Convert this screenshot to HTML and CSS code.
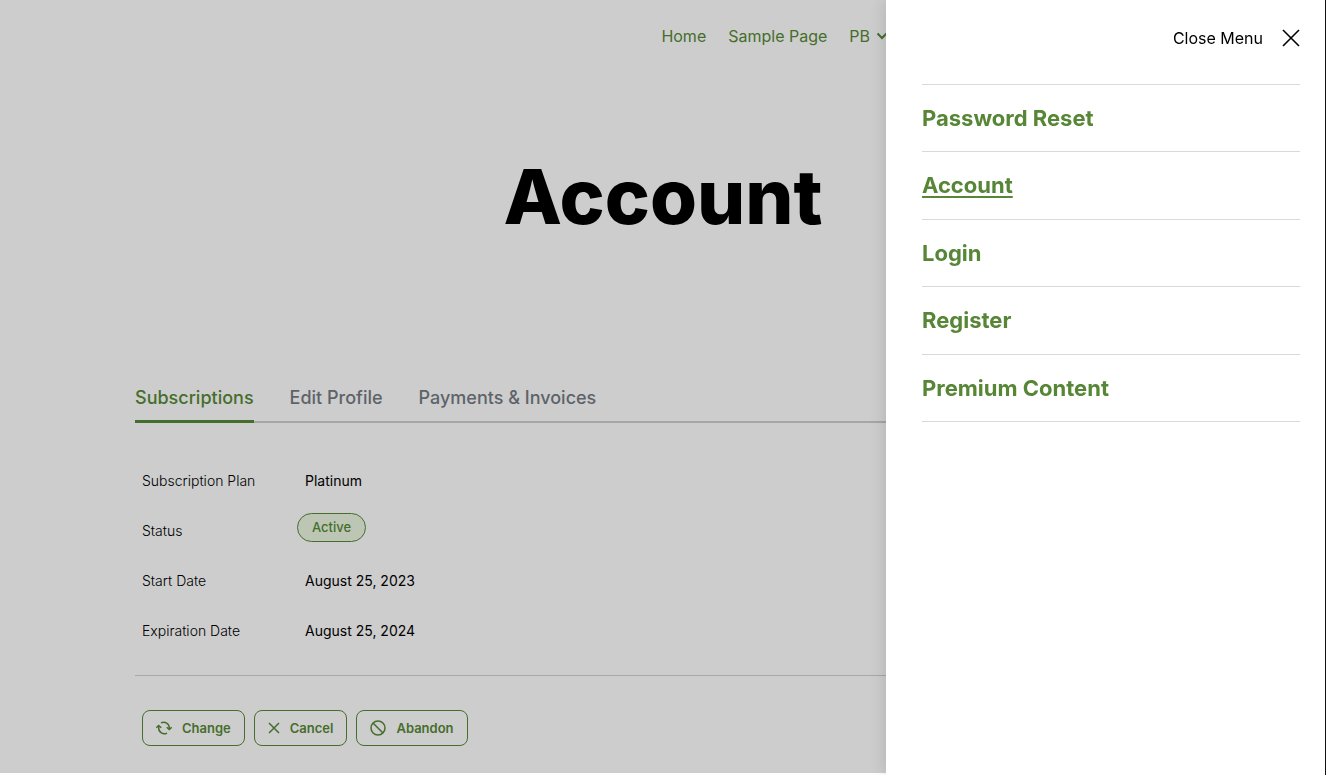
FILE: index.html
```html
<!DOCTYPE html>
<html lang="en">
<head>
<meta charset="utf-8">
<meta name="viewport" content="width=device-width, initial-scale=1">
<title>Account</title>
<link rel="stylesheet" href="styles.css">
</head>
<body>
<div class="page">
  <header class="site-header">
    <nav class="main-nav" aria-label="Main">
      <a href="#">Home</a>
      <a href="#">Sample Page</a>
      <a class="has-children" href="#">PB
        <svg class="chevron" viewBox="0 0 12 8" aria-hidden="true"><path d="M1.500 1.500 6 6l4.500-4.500"/></svg>
      </a>
    </nav>
  </header>
  <main class="content">
    <h1 class="page-title">Account</h1>
    <nav class="tabs" aria-label="Account sections">
      <a class="tab tab-active" href="#" aria-current="page">Subscriptions</a>
      <a class="tab" href="#">Edit Profile</a>
      <a class="tab" href="#">Payments &amp; Invoices</a>
    </nav>
    <table class="details">
      <tbody>
        <tr><th scope="row">Subscription Plan</th><td>Platinum</td></tr>
        <tr><th scope="row">Status</th><td class="status-cell"><span class="status">Active</span></td></tr>
        <tr><th scope="row">Start Date</th><td>August 25, 2023</td></tr>
        <tr><th scope="row">Expiration Date</th><td>August 25, 2024</td></tr>
      </tbody>
    </table>
    <div class="actions">
      <button class="action" type="button">
        <svg class="icon" viewBox="0 0 16 16" aria-hidden="true"><path d="M5 2.900A5.600 5.600 0 0 1 13.300 8v1M11 13.100A5.600 5.600 0 0 1 2.700 8V6"/><path d="M10.700 7.200 13.300 9.500l2.400-2.300M.3 7.800l2.400-2.300 2.600 2.300"/></svg>
        Change
      </button>
      <button class="action" type="button">
        <svg class="icon icon-small" viewBox="0 0 12 12" aria-hidden="true"><path d="m1 1 10 10M11 1 1 11"/></svg>
        Cancel
      </button>
      <button class="action" type="button">
        <svg class="icon" viewBox="0 0 16 16" aria-hidden="true"><circle cx="8" cy="8" r="7"/><path d="m3 3 10 10"/></svg>
        Abandon
      </button>
    </div>
  </main>
</div>
<aside class="drawer">
  <button class="close" type="button">
    Close Menu
    <svg class="close-icon" viewBox="0 0 18 18" aria-hidden="true"><path d="m1 1 16 16M17 1 1 17"/></svg>
  </button>
  <nav aria-label="Menu">
    <ul class="menu">
      <li><a href="#">Password Reset</a></li>
      <li><a class="current" href="#" aria-current="page">Account</a></li>
      <li><a href="#">Login</a></li>
      <li><a href="#">Register</a></li>
      <li><a href="#">Premium Content</a></li>
    </ul>
  </nav>
</aside>
</body>
</html>
```
FILE: styles.css
```css
* { box-sizing: border-box; }

body {
  margin: 0;
  min-height: 100vh;
  display: flex;
  background: #fff;
  color: #000;
  font-family: Inter, "Liberation Sans", sans-serif;
}

a { color: inherit; text-decoration: none; }

svg { flex: none; fill: none; stroke: currentColor; }

.page {
  flex: 1;
  margin-bottom: 2px;
  background: #cdcdcd;
}

.site-header {
  padding: 24px 438px 0 24px;
  color: #456e2c;
}

.main-nav {
  display: flex;
  justify-content: flex-end;
  gap: 22px;
  font-size: 16px;
  font-weight: 400;
  line-height: 24px;
}

.has-children { display: flex; align-items: center; gap: 6px; }

.chevron { width: 12px; height: 8px; stroke-width: 2; }

.content {
  width: calc(100% - 48px);
  max-width: 1056px;
  margin: 0 auto;
}

.page-title {
  margin: 106px 0 0;
  text-align: center;
  font-size: 76px;
  font-weight: 800;
  line-height: 84px;
}

.tabs {
  display: flex;
  gap: 36px;
  margin-top: 146px;
  border-bottom: 2px solid #a6a6a8;
  color: #5d6369;
  font-size: 18px;
  font-weight: 500;
  line-height: 28px;
}

.tab { padding-bottom: 8px; }

.tab-active {
  margin-bottom: -2px;
  border-bottom: 3px solid #456e2c;
  color: #456e2c;
}

.details {
  width: 100%;
  margin-top: 33px;
  border-collapse: collapse;
  font-size: 14px;
  line-height: 20px;
}

.details tr { height: 50px; }

.details th {
  width: 162px;
  padding: 0 7px;
  text-align: left;
  font-weight: 300;
}

.details td { padding: 0 8px; font-weight: 400; }

.details .status-cell { padding: 0 0 7px; }

.status {
  display: inline-block;
  padding: 3px 14px 4px;
  border: 1px solid #456e2c;
  border-radius: 15px;
  background: #bdc6b5;
  color: #456e2c;
  font-size: 13px;
  font-weight: 500;
}

.actions {
  display: flex;
  gap: 9px;
  margin-top: 19px;
  padding: 34px 7px 24px;
  border-top: 1px solid #a6a9a8;
}

.action {
  display: flex;
  align-items: center;
  gap: 10px;
  height: 36px;
  padding: 0 13px;
  border: 1px solid #456e2c;
  border-radius: 8px;
  background: none;
  color: #456e2c;
  font: 600 13px/20px Inter, "Liberation Sans", sans-serif;
}

.icon { width: 16px; height: 16px; stroke-width: 1.5; }

.icon-small { width: 12px; height: 12px; }

.drawer {
  position: fixed;
  inset: 0 0 0 auto;
  width: 440px;
  padding: 22px 25px 0 36px;
  border-right: 1px solid #111;
  background: #fff;
  box-shadow: 0 0 16px rgba(0, 0, 0, 0.15);
}

.close {
  display: flex;
  align-items: center;
  justify-content: flex-end;
  gap: 19px;
  width: 100%;
  height: 32px;
  padding: 0;
  border: 0;
  background: none;
  color: #000;
  font: 400 16px/24px Inter, "Liberation Sans", sans-serif;
}

.close-icon { width: 18px; height: 18px; stroke-width: 1.6; }

.menu {
  margin: 30px 0 0;
  padding: 0;
  border-top: 1px solid #d9d9d9;
  list-style: none;
  color: #568636;
  font-size: 22px;
  font-weight: 700;
  line-height: 1.2;
}

.menu a { display: block; padding: 20px 0; }

.menu li { border-bottom: 1px solid #d9d9d9; }

.menu .current {
  text-decoration: underline;
  text-decoration-thickness: 2px;
  text-underline-offset: 3px;
}
```
